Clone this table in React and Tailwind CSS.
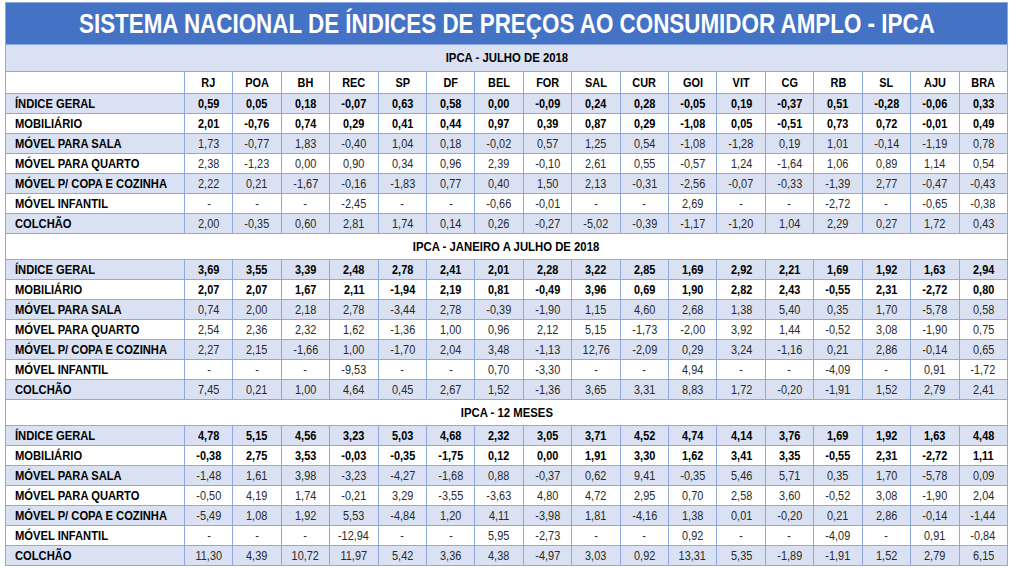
import React from "react";

const cities = ["RJ", "POA", "BH", "REC", "SP", "DF", "BEL", "FOR", "SAL", "CUR", "GOI", "VIT", "CG", "RB", "SL", "AJU", "BRA"];

const labels = [
  "ÍNDICE GERAL",
  "MOBILIÁRIO",
  "MÓVEL PARA SALA",
  "MÓVEL PARA QUARTO",
  "MÓVEL P/ COPA E COZINHA",
  "MÓVEL INFANTIL",
  "COLCHÃO",
];

const sections = [
  {
    title: "IPCA - JULHO DE 2018",
    shaded: true,
    rows: [
      "0,59 0,05 0,18 -0,07 0,63 0,58 0,00 -0,09 0,24 0,28 -0,05 0,19 -0,37 0,51 -0,28 -0,06 0,33",
      "2,01 -0,76 0,74 0,29 0,41 0,44 0,97 0,39 0,87 0,29 -1,08 0,05 -0,51 0,73 0,72 -0,01 0,49",
      "1,73 -0,77 1,83 -0,40 1,04 0,18 -0,02 0,57 1,25 0,54 -1,08 -1,28 0,19 1,01 -0,14 -1,19 0,78",
      "2,38 -1,23 0,00 0,90 0,34 0,96 2,39 -0,10 2,61 0,55 -0,57 1,24 -1,64 1,06 0,89 1,14 0,54",
      "2,22 0,21 -1,67 -0,16 -1,83 0,77 0,40 1,50 2,13 -0,31 -2,56 -0,07 -0,33 -1,39 2,77 -0,47 -0,43",
      "- - - -2,45 - - -0,66 -0,01 - - 2,69 - - -2,72 - -0,65 -0,38",
      "2,00 -0,35 0,60 2,81 1,74 0,14 0,26 -0,27 -5,02 -0,39 -1,17 -1,20 1,04 2,29 0,27 1,72 0,43",
    ],
  },
  {
    title: "IPCA - JANEIRO A JULHO DE 2018",
    rows: [
      "3,69 3,55 3,39 2,48 2,78 2,41 2,01 2,28 3,22 2,85 1,69 2,92 2,21 1,69 1,92 1,63 2,94",
      "2,07 2,07 1,67 2,11 -1,94 2,19 0,81 -0,49 3,96 0,69 1,90 2,82 2,43 -0,55 2,31 -2,72 0,80",
      "0,74 2,00 2,18 2,78 -3,44 2,78 -0,39 -1,90 1,15 4,60 2,68 1,38 5,40 0,35 1,70 -5,78 0,58",
      "2,54 2,36 2,32 1,62 -1,36 1,00 0,96 2,12 5,15 -1,73 -2,00 3,92 1,44 -0,52 3,08 -1,90 0,75",
      "2,27 2,15 -1,66 1,00 -1,70 2,04 3,48 -1,13 12,76 -2,09 0,29 3,24 -1,16 0,21 2,86 -0,14 0,65",
      "- - - -9,53 - - 0,70 -3,30 - - 4,94 - - -4,09 - 0,91 -1,72",
      "7,45 0,21 1,00 4,64 0,45 2,67 1,52 -1,36 3,65 3,31 8,83 1,72 -0,20 -1,91 1,52 2,79 2,41",
    ],
  },
  {
    title: "IPCA - 12 MESES",
    rows: [
      "4,78 5,15 4,56 3,23 5,03 4,68 2,32 3,05 3,71 4,52 4,74 4,14 3,76 1,69 1,92 1,63 4,48",
      "-0,38 2,75 3,53 -0,03 -0,35 -1,75 0,12 0,00 1,91 3,30 1,62 3,41 3,35 -0,55 2,31 -2,72 1,11",
      "-1,48 1,61 3,98 -3,23 -4,27 -1,68 0,88 -0,37 0,62 9,41 -0,35 5,46 5,71 0,35 1,70 -5,78 0,09",
      "-0,50 4,19 1,74 -0,21 3,29 -3,55 -3,63 4,80 4,72 2,95 0,70 2,58 3,60 -0,52 3,08 -1,90 2,04",
      "-5,49 1,08 1,92 5,53 -4,84 1,20 4,11 -3,98 1,81 -4,16 1,38 0,01 -0,20 0,21 2,86 -0,14 -1,44",
      "- - - -12,94 - - 5,95 -2,73 - - 0,92 - - -4,09 - 0,91 -0,84",
      "11,30 4,39 10,72 11,97 5,42 3,36 4,38 -4,97 3,03 0,92 13,31 5,35 -1,89 -1,91 1,52 2,79 6,15",
    ],
  },
];

// Arial Narrow isn't installed, so Liberation Sans is squeezed horizontally
const narrow = "inline-block whitespace-nowrap scale-x-[0.84]";

export default function App() {
  return (
    <div className="w-[1014px] h-[568px] bg-white pt-[2px] pl-[5px] font-['Liberation_Sans',Arial,sans-serif] text-black overflow-hidden">
      <table className="w-[1003px] table-fixed border-collapse border border-[#8EA9DB]">
        <colgroup>
          <col className="w-[179px]" />
          {cities.map((c) => (
            <col key={c} />
          ))}
        </colgroup>
        <tbody>
          <tr className="h-[42px] bg-[#4472C4]">
            <td colSpan={18} className="p-0">
              <div className="flex justify-center text-white font-bold text-[28px] leading-none">
                <span className="shrink-0 whitespace-nowrap scale-x-[0.8]">
                  SISTEMA NACIONAL DE ÍNDICES DE PREÇOS AO CONSUMIDOR AMPLO - IPCA
                </span>
              </div>
            </td>
          </tr>
          {sections.map((s) => (
            <React.Fragment key={s.title}>
              <tr className={s.shaded ? "h-[27px] bg-[#D9E1F2]" : "h-[26px] bg-white"}>
                <td colSpan={18} className="text-center font-bold text-[13.5px] leading-none p-0 border border-[#8EA9DB]">
                  <span className={narrow}>{s.title}</span>
                </td>
              </tr>
              {s.shaded && (
                <tr className="h-[22px] bg-white">
                  <td className="border border-[#8EA9DB]"></td>
                  {cities.map((c) => (
                    <td key={c} className="text-center font-bold text-[13px] leading-none p-0 border border-[#8EA9DB]">
                      <span className={narrow}>{c}</span>
                    </td>
                  ))}
                </tr>
              )}
              {s.rows.map((r, i) => {
                const bold = i < 2;
                return (
                  <tr key={i} className={i % 2 === 0 ? "h-[20px] bg-[#D9E1F2]" : "h-[20px] bg-white"}>
                    <td className="pl-[9px] py-0 text-left font-bold text-[13px] leading-none whitespace-nowrap border border-[#8EA9DB]">
                      <span className="inline-block whitespace-nowrap scale-x-[0.86] origin-left">{labels[i]}</span>
                    </td>
                    {r.split(" ").map((v, j) => (
                      <td
                        key={j}
                        className={
                          bold
                            ? "text-center font-bold text-[13px] leading-none p-0 border border-[#8EA9DB]"
                            : "text-center text-[13px] text-[#2a2a2a] leading-none p-0 border border-[#8EA9DB]"
                        }
                      >
                        <span className={narrow}>{v}</span>
                      </td>
                    ))}
                  </tr>
                );
              })}
            </React.Fragment>
          ))}
        </tbody>
      </table>
    </div>
  );
}
